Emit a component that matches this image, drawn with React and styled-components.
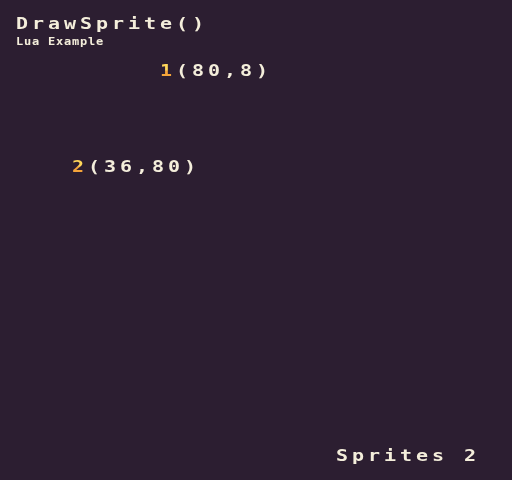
import React from "react";
import styled, { createGlobalStyle, css } from "styled-components";

const Global = createGlobalStyle`
  html, body { margin: 0; padding: 0; background: #2c1e31; }
  #root { width: 512px; height: 480px; }
`;

const pixelLarge = css`
  font-size: 20px;
  line-height: 20px;
  height: 16px;
  letter-spacing: 3.96px;
  transform: scaleY(0.75);
  transform-origin: 0 0;
  white-space: pre;
`;

const Screen = styled.div`
  position: relative;
  box-sizing: border-box;
  width: 512px;
  height: 480px;
  background: #2c1e31;
  color: #f4eedb;
  font-family: "DejaVu Sans Mono", "Liberation Mono", monospace;
  font-weight: bold;
  padding: 16px 32px 16px 16px;
  display: flex;
  flex-direction: column;
  -webkit-font-smoothing: none;
`;

const Header = styled.header`
  display: flex;
  flex-direction: column;
  gap: 4px;
`;

const Title = styled.h1`
  margin: 0;
  font: inherit;
  ${pixelLarge};
`;

const Subtitle = styled.div`
  font-size: 12px;
  line-height: 12px;
  height: 10px;
  letter-spacing: 0.78px;
  transform: scaleY(0.85);
  transform-origin: 0 0;
`;

const Canvas = styled.div`
  flex: 1;
`;

const SpriteLabel = styled.div`
  position: absolute;
  left: ${(p) => p.$x}px;
  top: ${(p) => p.$y}px;
  ${pixelLarge};
`;

const Id = styled.span`
  background: linear-gradient(#ffd65a 0%, #ffd65a 49%, #f5a43a 49%, #f5a43a 100%);
  -webkit-background-clip: text;
  background-clip: text;
  color: transparent;
`;

const Footer = styled.div`
  align-self: flex-end;
  ${pixelLarge};
`;

const sprites = [
  { id: 1, x: 80, y: 8, lx: 160, ly: 63 },
  { id: 2, x: 36, y: 80, lx: 72, ly: 159 },
];

export default function App() {
  return (
    <>
      <Global />
      <Screen>
        <Header>
          <Title>DrawSprite()</Title>
          <Subtitle>Lua Example</Subtitle>
        </Header>
        <Canvas>
          {sprites.map((s) => (
            <SpriteLabel key={s.id} $x={s.lx} $y={s.ly}>
              <Id>{s.id}</Id>({s.x},{s.y})
            </SpriteLabel>
          ))}
        </Canvas>
        <Footer>Sprites {sprites.length}</Footer>
      </Screen>
    </>
  );
}
